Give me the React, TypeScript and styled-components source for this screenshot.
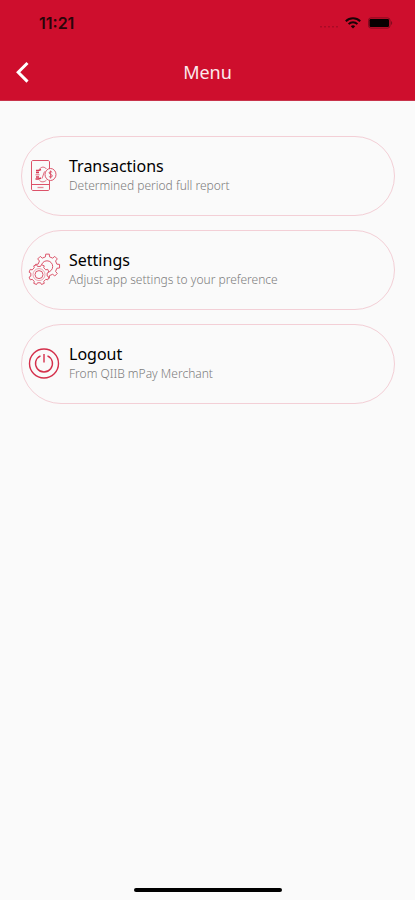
import React from "react";
import styled, { createGlobalStyle } from "styled-components";

const GlobalStyle = createGlobalStyle`
  *, *::before, *::after { box-sizing: border-box; }
  body {
    margin: 0;
    background: #fafafa;
    font-family: "Noto Sans", "Open Sans", sans-serif;
  }
`;

const Screen = styled.div`
  display: flex;
  flex-direction: column;
  min-height: 100vh;
  background: #fafafa;
`;

const TopArea = styled.header`
  background: #ce0e2d;
  border-bottom: 1px solid #c8334b;
`;

const StatusBar = styled.div`
  display: flex;
  align-items: center;
  justify-content: space-between;
  height: 44px;
  padding: 2px 22px 0 39px;
  color: #2a0509;
`;

const Clock = styled.time`
  font-family: Inter, sans-serif;
  font-size: 16px;
  font-weight: 600;
  line-height: 20px;
`;

const StatusIcons = styled.div`
  display: flex;
  align-items: center;
  gap: 7px;
`;

const TitleBar = styled.div`
  display: grid;
  grid-template-columns: 44px 1fr 44px;
  align-items: center;
  height: 56px;
`;

const BackButton = styled.button`
  display: flex;
  align-items: center;
  justify-content: center;
  height: 44px;
  padding: 0;
  border: 0;
  background: none;
  color: #fff;
  cursor: pointer;
`;

const Title = styled.h1`
  margin: 0;
  text-align: center;
  color: #fbe9ec;
  font-size: 18px;
  font-weight: 400;
  line-height: 24px;
`;

const MenuList = styled.nav`
  flex: 1;
  display: flex;
  flex-direction: column;
  gap: 14px;
  padding: 35px 20px 35px 21px;
`;

const MenuCard = styled.button`
  display: flex;
  align-items: center;
  gap: 8px;
  width: 100%;
  min-height: 80px;
  padding: 0 24px 2px 5px;
  border: 1px solid #f3cfd6;
  border-radius: 40px;
  background: transparent;
  font-family: inherit;
  text-align: left;
  cursor: pointer;

  svg { flex: none; }
`;

const CardText = styled.span`
  display: flex;
  flex-direction: column;
`;

const CardTitle = styled.span`
  color: #000;
  font-size: 16px;
  font-weight: 400;
  line-height: 22px;
`;

const CardHint = styled.span`
  color: #7c7c7c;
  font-size: 12px;
  font-weight: 300;
  line-height: 18px;
`;

const HomeArea = styled.footer`
  display: flex;
  justify-content: center;
  padding-bottom: 8px;
`;

const HomeIndicator = styled.div`
  width: 148px;
  height: 4px;
  border-radius: 2px;
  background: #000;
`;

function gearPath(cx: number, cy: number, root: number, tip: number, teeth: number, turn = 0) {
  const step = (Math.PI * 2) / teeth;
  const point = (r: number, a: number) =>
    `${(cx + r * Math.cos(a)).toFixed(2)} ${(cy + r * Math.sin(a)).toFixed(2)}`;
  const parts: string[] = [];
  for (let i = 0; i < teeth; i++) {
    const a = i * step + turn;
    parts.push(
      point(root, a - step * 0.27),
      point(tip, a - step * 0.19),
      point(tip, a + step * 0.19),
      point(root, a + step * 0.27)
    );
  }
  return `M${parts.join("L")}Z`;
}

const SignalDots = () => (
  <svg width="19" height="12" viewBox="0 0 19 12" fill="#a30b24" aria-hidden="true">
    {[1, 5, 9, 13, 17].map((x) => (
      <rect key={x} x={x} y="9" width="2" height="1.5" rx=".7" />
    ))}
  </svg>
);

const WifiIcon = () => (
  <svg width="16" height="12" viewBox="0 0 16 12" fill="none" stroke="#190306" strokeWidth="2" aria-hidden="true">
    <path d="M.8 4.3a10.2 10.2 0 0 1 14.4 0M3.6 7.1a6.2 6.2 0 0 1 8.8 0" />
    <path d="M8 11.5 5.8 9.3a3.1 3.1 0 0 1 4.4 0Z" fill="#190306" stroke="none" />
  </svg>
);

const BatteryIcon = () => (
  <svg width="25" height="12" viewBox="0 0 25 12" aria-hidden="true">
    <rect x=".5" y=".9" width="21.5" height="10.2" rx="2.4" fill="none" stroke="#840b1f" />
    <rect x="1.5" y="2" width="19.5" height="8" rx="1.2" fill="#060001" />
    <path d="M23 4v4c1.6-.6 1.6-3.4 0-4Z" fill="#840b1f" />
  </svg>
);

const BackIcon = () => (
  <svg width="16" height="22" viewBox="0 0 16 22" fill="none" stroke="currentColor" strokeWidth="3" aria-hidden="true">
    <path d="M13.500 2 4.200 11.300 13.500 20.600" />
  </svg>
);

const TransactionsIcon = () => (
  <svg width="34" height="34" viewBox="0 0 34 34" fill="none" stroke="#dc5269" strokeWidth="1" aria-hidden="true">
    <path d="M22.5 11V4c0-.8-.5-1.500-1.500-1.500H6c-1 0-1.500.7-1.500 1.500v27c0 .8.5 1.500 1.500 1.500h15c1 0 1.500-.7 1.500-1.500V22.500M4.500 26.500h18" />
    <path d="M10.500 29.500h6" strokeWidth="1.300" stroke="#e58b9a" />
    <ellipse cx="23.500" cy="16.500" rx="5.500" ry="6" />
    <path d="M25.200 14.300c-.7-1-3.100-1-3.100.6 0 1.500 3.200 1.300 3.200 3 0 1.500-2.600 1.600-3.400.4M23.600 12.500v8" />
    <path d="M9 12.500h2.500l2.500-1M9 14.500h3M9 19h3M8.500 21h3l2.500-1" strokeWidth="1.500" stroke="#d63a55" />
    <path d="M12.500 11c2-2.500 5-2.500 7 0M12.500 22.500c2 2 5 1.700 7-.5M17.500 13.500l-2.500 7M8.500 16.800h4" stroke="#df6b7f" />
  </svg>
);

const SettingsIcon = () => (
  <svg width="34" height="34" viewBox="0 0 34 34" fill="none" stroke="#dc566c" strokeWidth="1" strokeLinejoin="round" aria-hidden="true">
    <path d={gearPath(20.5, 14.2, 9.6, 12.2, 8, 0)} />
    <circle cx="20" cy="14.500" r="5.700" />
    <path d={gearPath(12, 22.6, 8.3, 10.2, 8, 0.39)} fill="#fafafa" />
    <circle cx="12" cy="22.600" r="6" stroke="#eba5b1" />
    <circle cx="12" cy="22.600" r="4" />
  </svg>
);

const LogoutIcon = () => (
  <svg width="34" height="34" viewBox="0 0 34 34" fill="none" stroke="#d42f4b" strokeWidth="1.4" aria-hidden="true">
    <circle cx="17" cy="17.500" r="14.500" />
    <path d="M13.500 9.800a8.500 8.500 0 1 0 7 0" />
    <path d="M17 8v8.500" />
  </svg>
);

const items = [
  { title: "Transactions", hint: "Determined period full report", Icon: TransactionsIcon },
  { title: "Settings", hint: "Adjust app settings to your preference", Icon: SettingsIcon },
  { title: "Logout", hint: "From QIIB mPay Merchant", Icon: LogoutIcon },
];

export default function App() {
  return (
    <Screen>
      <GlobalStyle />
      <TopArea>
        <StatusBar>
          <Clock>11:21</Clock>
          <StatusIcons>
            <SignalDots />
            <WifiIcon />
            <BatteryIcon />
          </StatusIcons>
        </StatusBar>
        <TitleBar>
          <BackButton type="button" aria-label="Back">
            <BackIcon />
          </BackButton>
          <Title>Menu</Title>
        </TitleBar>
      </TopArea>
      <MenuList aria-label="Menu">
        {items.map(({ title, hint, Icon }) => (
          <MenuCard key={title} type="button">
            <Icon />
            <CardText>
              <CardTitle>{title}</CardTitle>
              <CardHint>{hint}</CardHint>
            </CardText>
          </MenuCard>
        ))}
      </MenuList>
      <HomeArea>
        <HomeIndicator />
      </HomeArea>
    </Screen>
  );
}
